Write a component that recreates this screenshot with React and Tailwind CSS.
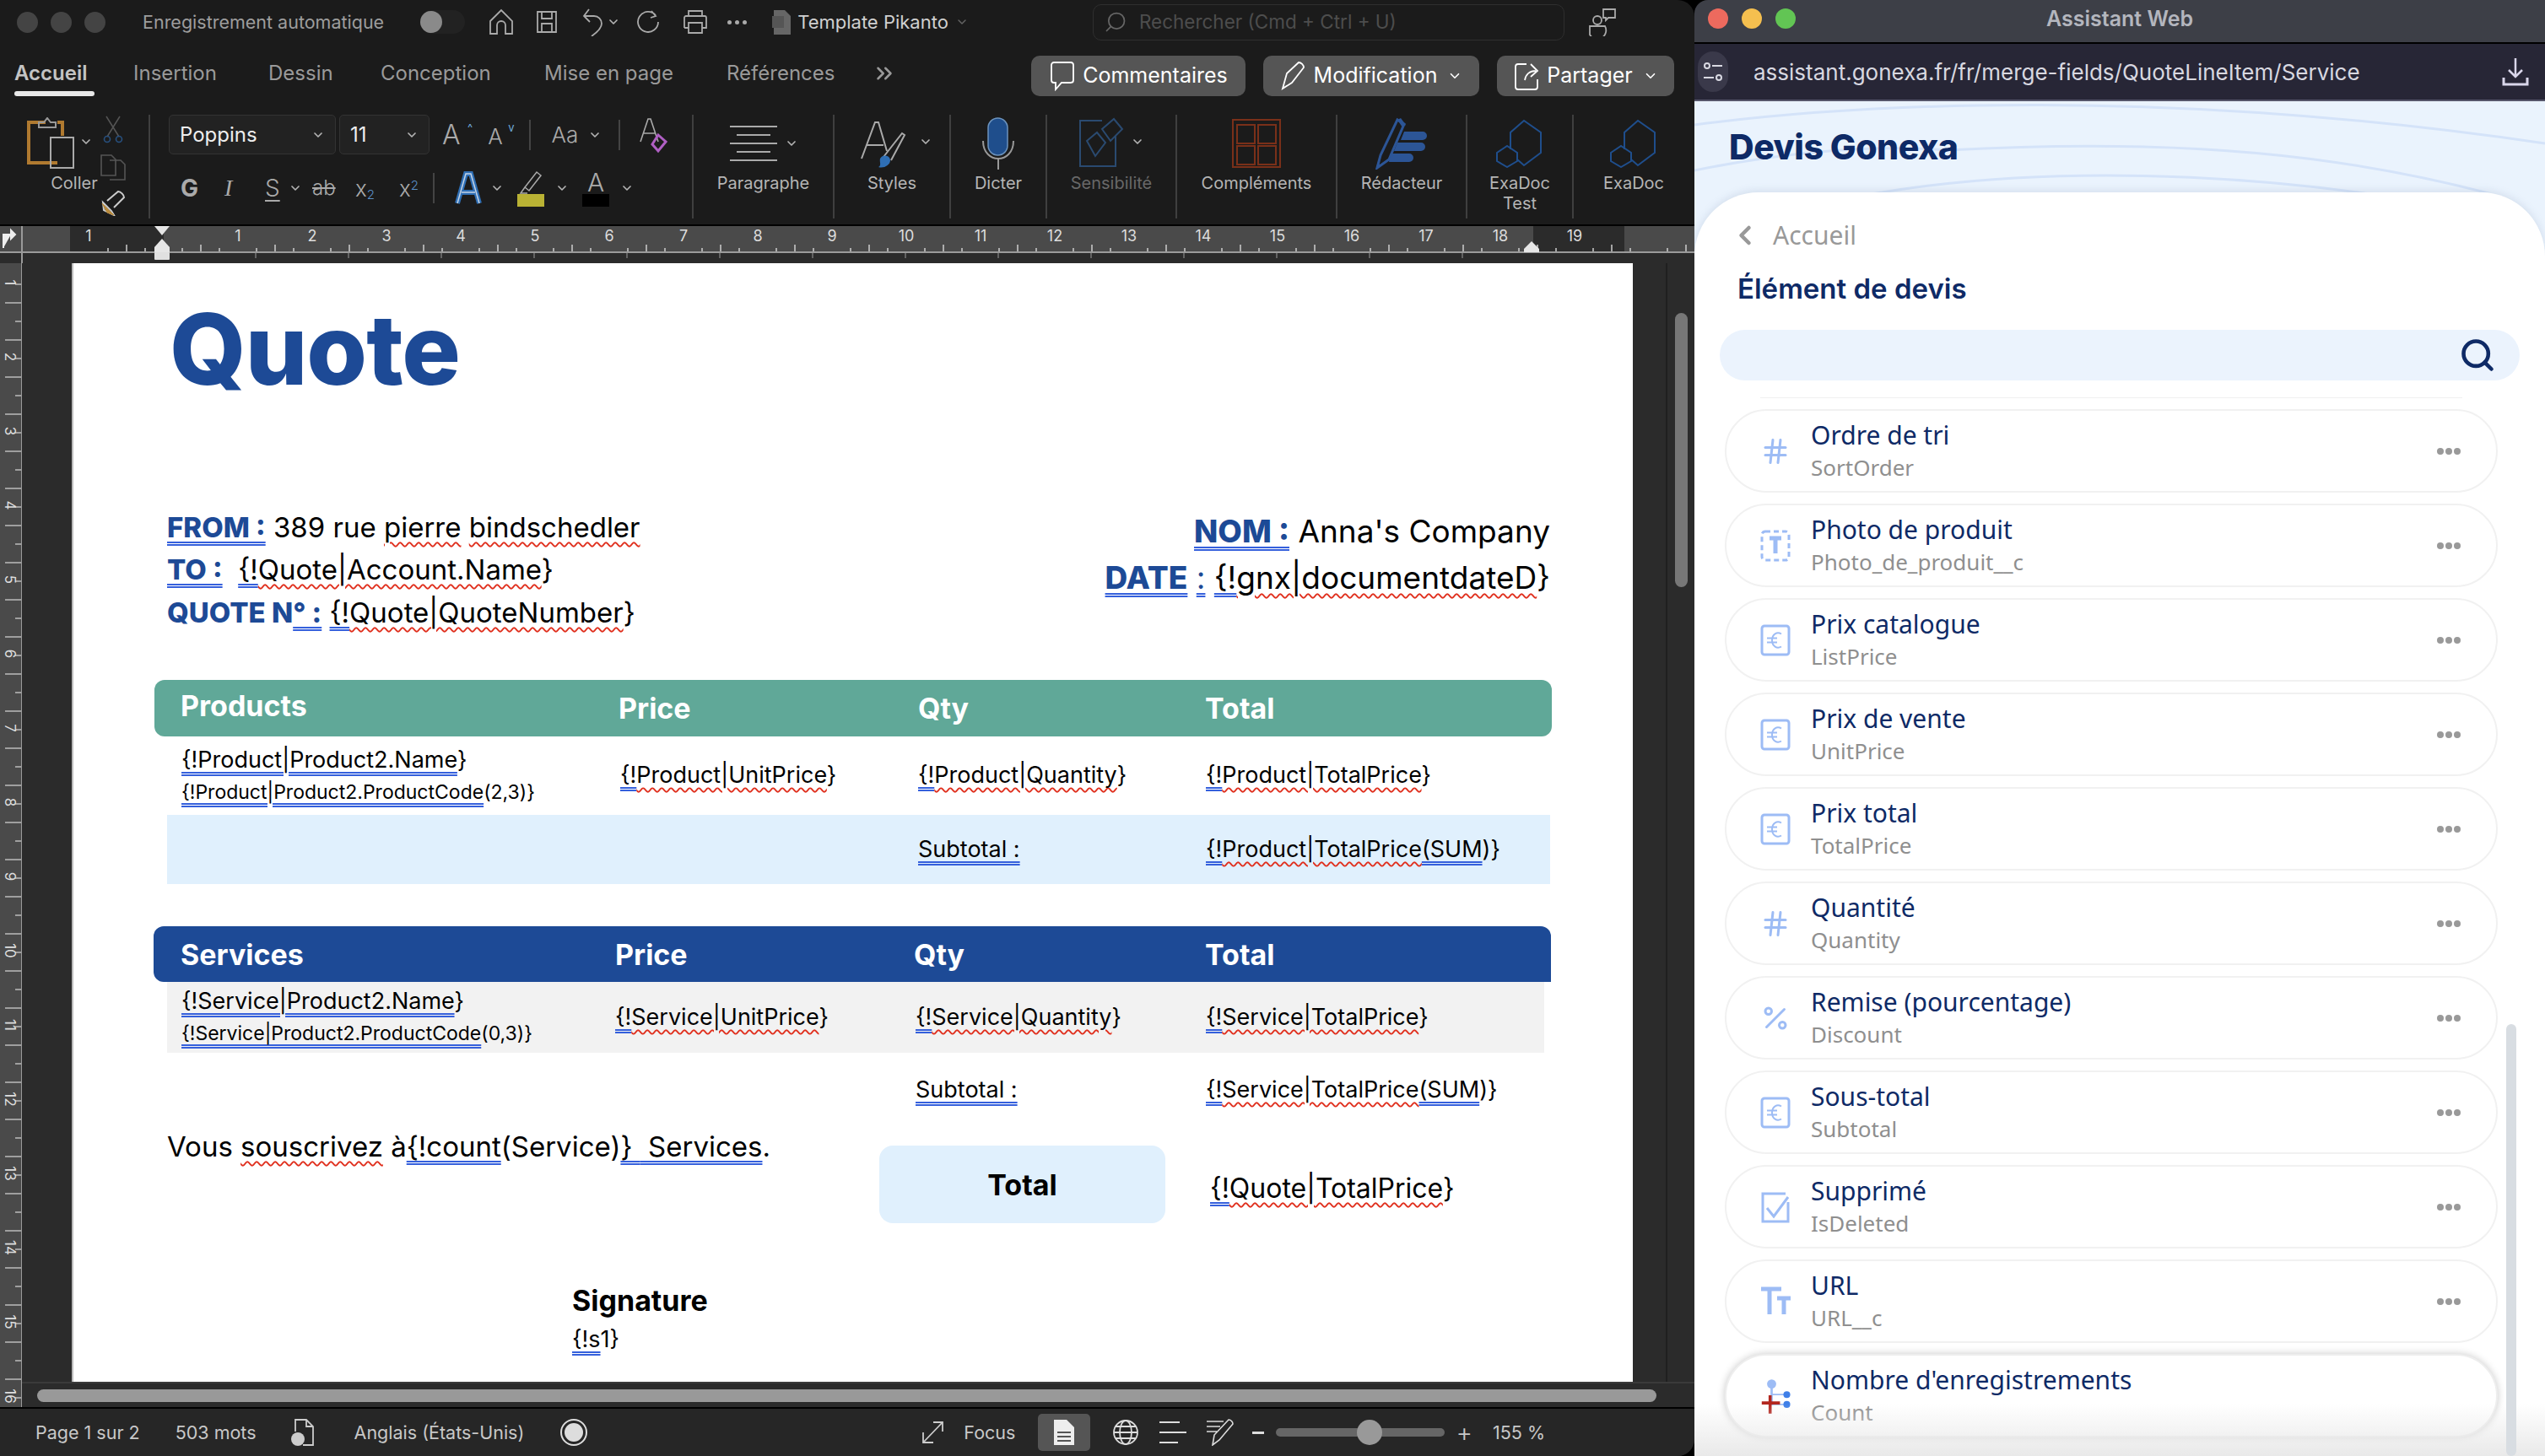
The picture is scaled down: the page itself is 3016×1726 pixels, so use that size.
import { ChevronDown, ChevronLeft, ChevronsRight, Hash, Percent, Search } from "lucide-react";

const blue = "underline decoration-double decoration-[#3560dc] decoration-[2px] underline-offset-[5px]";
const wavy = "underline decoration-wavy decoration-[#e0301e] decoration-[1.5px] underline-offset-[5px]";

// {!Quote|Foo} : blue on the "{!", red squiggle after
function Field({ text, tail }) {
  return (
    <span className="whitespace-nowrap">
      <span className={blue}>{text.slice(0, 2)}</span>
      <span className={wavy}>{text.slice(2)}</span>
      {tail && <span className={blue}>{tail[0]}</span>}
      {tail && tail[1]}
      {!tail && "}"}
    </span>
  );
}

function Chev({ className = "" }) {
  return <ChevronDown size={16} strokeWidth={2.5} className={`text-[#b5b5b5] shrink-0 ${className}`} />;
}

function Ico({ w = 30, h = 30, vb, children, className = "" }) {
  return (
    <svg width={w} height={h} viewBox={vb || `0 0 ${w} ${h}`} fill="none" stroke="#aaa" strokeWidth="1.8" className={`shrink-0 ${className}`}>
      {children}
    </svg>
  );
}

function Group({ w, label, label2, dim, children, last }) {
  return (
    <div className={`flex flex-col items-center h-[123px] shrink-0 ${last ? "" : "border-r-2 border-[#3f3f3f]"}`} style={{ width: w }}>
      <div className="h-[68px] flex items-center justify-center w-full gap-2">{children}</div>
      <div className={`mt-[1px] text-[20px] leading-[24px] text-center ${dim ? "text-[#686868]" : "text-[#b5b5b5]"}`}>
        {label}
        {label2 && <br />}
        {label2}
      </div>
    </div>
  );
}

function TopButton({ icon, label, chevron, w }) {
  return (
    <div className="flex items-center justify-center gap-2 h-[48px] rounded-[10px] bg-[#555] text-white text-[25px] shrink-0" style={{ width: w }}>
      {icon}
      <span>{label}</span>
      {chevron && <ChevronDown size={18} strokeWidth={2.2} className="ml-1" />}
    </div>
  );
}

function HRuler() {
  const ticks = [];
  for (let x = 84 + 22; x < 2008; x += 22) {
    const off = Math.round((x - 194) / 22);
    if (off % 4 === 0) continue;
    ticks.push(<line key={x} x1={x} x2={x} y1={off % 2 === 0 ? 22 : 26} y2="31" stroke="#cfcfcf" strokeWidth="1.5" />);
  }
  const nums = [];
  nums.push(<text key="m" x={105} y="18" fill="#ddd" fontSize="18" textAnchor="middle">1</text>);
  for (let i = 1; i <= 19; i++) {
    nums.push(<text key={i} x={194 + i * 88 - 0} y="18" fill="#ddd" fontSize="18" textAnchor="middle">{i}</text>);
  }
  const low = [];
  for (let x = 303; x < 1830; x += 110) low.push(<line key={x} x1={x} x2={x} y1="31" y2="38" stroke="#777" strokeWidth="1.5" />);
  return (
    <svg width="2008" height="44" className="block shrink-0">
      <rect width="2008" height="44" fill="#2b2b2b" />
      <rect x="0" width="2008" height="31" fill="#4a4a4a" />
      <rect x="83" width="111" height="31" fill="#2b2b2b" />
      <rect x="1817" width="108" height="31" fill="#2b2b2b" />
      {ticks}
      {nums}
      {low}
      <line x1="0" x2="2008" y1="31" y2="31" stroke="#9a9a9a" strokeWidth="2" />
      <line x1="26" x2="26" y1="0" y2="44" stroke="#9a9a9a" strokeWidth="2" />
      <path d="M4 26V10h9M13 5l5 5-5 5z" stroke="#eee" strokeWidth="2" fill="#eee" />
      <path d="M183 0h18l-9 11z" fill="#e6e6e6" />
      <path d="M192 15l9 10v6h-18v-6z" fill="#e6e6e6" />
      <rect x="183" y="31" width="18" height="9" rx="1" fill="#e0e0e0" />
      <path d="M1815 18l9 9v4h-18v-4z" fill="#e6e6e6" />
    </svg>
  );
}

function VRuler() {
  const items = [];
  for (let i = 0; i < 62; i++) {
    const y = 25 + i * 22;
    const long = i % 2 === 1;
    items.push(<line key={i} x1={long ? 6 : 18} x2="26" y1={y} y2={y} stroke="#bdbdbd" strokeWidth="1.5" />);
  }
  const nums = [];
  for (let i = 1; i <= 16; i++) {
    const y = 23 + (i - 1) * 88;
    nums.push(
      <text key={i} x="0" y="0" fill="#ddd" fontSize="17" textAnchor="middle" transform={`translate(6 ${y}) rotate(90)`}>{i}</text>
    );
  }
  return (
    <svg width="26" height="1356" className="block shrink-0">
      <rect width="26" height="1356" fill="#4a4a4a" />
      {items}
      {nums}
      <line x1="26" x2="26" y1="0" y2="1356" stroke="#9a9a9a" strokeWidth="2" />
    </svg>
  );
}

function FontGroup() {
  return (
    <div className="w-[644px] h-[123px] shrink-0 border-r-2 border-[#3f3f3f] pl-[22px] flex flex-col text-[#aaa]">
      <div className="flex items-center h-[47px]">
        <div className="w-[198px] h-[47px] flex items-center justify-between px-3 bg-[#222] border border-[#333] rounded-[5px] text-[#eee] text-[24px]">
          Poppins <Chev />
        </div>
        <div className="ml-[4px] w-[107px] h-[47px] flex items-center justify-between px-3 bg-[#222] border border-[#333] rounded-[5px] text-[#eee] text-[24px]">
          11 <Chev />
        </div>
        <span className="ml-[15px] text-[32px] font-light w-[30px]">A</span>
        <span className="text-[#6fa8d8] text-[13px] -mt-4">^</span>
        <span className="ml-[18px] text-[26px] font-light w-[24px] mt-1">A</span>
        <span className="text-[#6fa8d8] text-[13px] -mt-4">v</span>
        <span className="ml-[18px] border-l-2 border-[#444] h-[36px]" />
        <span className="ml-[24px] text-[26px] font-light w-[36px]">Aa</span>
        <Chev className="ml-2" />
        <span className="ml-[20px] border-l-2 border-[#444] h-[36px]" />
        <svg width="34" height="44" viewBox="0 0 34 44" fill="none" className="ml-[22px]">
          <path d="M2 30 11 3h3l9 27M6 20h13" stroke="#aaa" strokeWidth="1.6" />
          <path d="M23 22l9 8-9 11-7-8z" stroke="#b05fc4" strokeWidth="3" />
        </svg>
      </div>
      <div className="flex items-center h-[46px] mt-[17px] pl-[14px] text-[28px]">
        <span className="w-[22px] font-bold">G</span>
        <span className="ml-[30px] w-[14px] italic font-light font-[Liberation_Serif,serif]">I</span>
        <span className="ml-[34px] w-[16px] font-light underline underline-offset-4">S</span>
        <Chev className="ml-[12px]" />
        <span className="ml-[12px] w-[34px] text-[24px] font-light line-through">ab</span>
        <span className="ml-[17px] w-[36px] text-[26px] font-light">x<sub className="text-[15px] text-[#5a8fc7]">2</sub></span>
        <span className="ml-[16px] w-[34px] text-[26px] font-light">x<sup className="text-[15px] text-[#5a8fc7]">2</sup></span>
        <span className="ml-[6px] border-l-2 border-[#444] h-[36px]" />
        <svg width="36" height="44" viewBox="0 0 36 44" className="ml-[22px]">
          <path d="M5 40 15 5h6l10 35M10 27h16" fill="none" stroke="#2f6fb5" strokeWidth="6" />
          <path d="M5 40 15 5h6l10 35M10 27h16" fill="none" stroke="#c4d4e6" strokeWidth="1.5" />
        </svg>
        <Chev className="ml-[8px]" />
        <div className="ml-[16px] w-[32px] flex flex-col items-center">
          <svg width="30" height="28" viewBox="0 0 30 28" fill="none"><path d="M8 20 22 2l5 4-14 18zM8 20l-5 7h8" stroke="#aaa" strokeWidth="1.5" /></svg>
          <div className="w-[32px] h-[15px] bg-[#b9b234]" />
        </div>
        <Chev className="ml-[13px]" />
        <div className="ml-[16px] w-[32px] flex flex-col items-center">
          <span className="text-[30px] leading-[28px] font-light">A</span>
          <div className="w-[32px] h-[15px] bg-black" />
        </div>
        <Chev className="ml-[13px]" />
      </div>
    </div>
  );
}

function EuroBox() {
  return (
    <svg width="36" height="40" viewBox="0 0 36 40" fill="none" stroke="#9dbcf5" strokeWidth="3">
      <rect x="2" y="3" width="32" height="34" rx="3" />
      <path d="M25 12.5c-5-3-11 0-11 7.5s6 10.5 11 7.5M8 17.5h12M8 22.5h12" strokeWidth="2" />
    </svg>
  );
}

const icons = {
  hash: <Hash size={40} strokeWidth={2} className="text-[#9dbcf5]" />,
  photo: (
    <svg width="36" height="40" viewBox="0 0 36 40" fill="none" stroke="#9dbcf5" strokeWidth="3">
      <rect x="2" y="3" width="32" height="34" rx="4" strokeDasharray="6 4" />
      <path d="M11 11h14M18 11v18" strokeWidth="5" />
    </svg>
  ),
  euro: <EuroBox />,
  percent: <Percent size={42} strokeWidth={2} className="text-[#9dbcf5]" />,
  check: (
    <svg width="36" height="40" viewBox="0 0 36 40" fill="none" stroke="#9dbcf5" strokeWidth="3">
      <path d="M30 4H3v33h30V14" />
      <path d="M8 21l8 10 17-23" />
    </svg>
  ),
  text: (
    <svg width="36" height="36" viewBox="0 0 36 36" fill="none" stroke="#9dbcf5" strokeWidth="5">
      <path d="M1 3h24M11 3v30M20 14h16M28 14v19" />
    </svg>
  ),
  count: (
    <svg width="40" height="44" viewBox="0 0 40 44" fill="none">
      <circle cx="15" cy="6" r="6" fill="#9dbcf5" />
      <path d="M15 10v24" stroke="#9dbcf5" strokeWidth="3" />
      <path d="M15 20h20M15 33h20" stroke="#9dbcf5" strokeWidth="2" />
      <circle cx="35" cy="20" r="4.5" fill="#3f7fe8" />
      <circle cx="35" cy="33" r="4.5" fill="#3f7fe8" />
      <path d="M2 31h24M13 21v24" stroke="#b3261e" strokeWidth="4" />
    </svg>
  ),
};

const fields = [
  ["hash", "Ordre de tri", "SortOrder"],
  ["photo", "Photo de produit", "Photo_de_produit__c"],
  ["euro", "Prix catalogue", "ListPrice"],
  ["euro", "Prix de vente", "UnitPrice"],
  ["euro", "Prix total", "TotalPrice"],
  ["hash", "Quantité", "Quantity"],
  ["percent", "Remise (pourcentage)", "Discount"],
  ["euro", "Sous-total", "Subtotal"],
  ["check", "Supprimé", "IsDeleted"],
  ["text", "URL", "URL__c"],
  ["count", "Nombre d'enregistrements", "Count"],
];

function FieldRow({ icon, title, api, last }) {
  return (
    <div className={`ml-[36px] w-[916px] h-[99px] mb-[13px] shrink-0 rounded-[50px] flex items-center pl-[40px] pr-[42px] bg-white border-2 ${last ? "border-[#eeeeee] shadow-[0_0_10px_rgba(0,0,0,0.22)] relative" : "border-[#f1f1f1]"}`}>
      <div className="w-[36px] flex justify-center shrink-0">{icons[icon]}</div>
      <div className="ml-[24px] flex-1">
        <div className="text-[30px] leading-[38px] text-[#0e2a66]">{title}</div>
        <div className="text-[26px] leading-[38px] text-[#8f8f8f]">{api}</div>
      </div>
      {!last && (
        <div className="flex gap-[2px]">
          <span className="w-[8px] h-[8px] rounded-full bg-[#999]" />
          <span className="w-[8px] h-[8px] rounded-full bg-[#999]" />
          <span className="w-[8px] h-[8px] rounded-full bg-[#999]" />
        </div>
      )}
    </div>
  );
}

function WordWindow() {
  return (
    <div className="w-[2008px] h-[1726px] shrink-0 flex flex-col bg-[#1b1b1b] rounded-r-[20px] overflow-hidden font-[Inter,sans-serif]">
      {/* title bar */}
      <div className="h-[52px] shrink-0 flex items-center relative">
        <div className="flex gap-[15px] pl-[20px]">
          <span className="w-[25px] h-[25px] rounded-full bg-[#444]" />
          <span className="w-[25px] h-[25px] rounded-full bg-[#444]" />
          <span className="w-[25px] h-[25px] rounded-full bg-[#444]" />
        </div>
        <span className="ml-[44px] text-[21.5px] text-[#9d9d9d]">Enregistrement automatique</span>
        <div className="ml-[43px] w-[53px] h-[28px] rounded-full bg-[#222] flex items-center">
          <span className="w-[26px] h-[26px] rounded-full bg-[#8a8a8a]" />
        </div>
        <Ico w={30} h={32} className="ml-[28px]"><path d="M2 15 15 2l13 13v15h-8V20a5 5 0 0 0-10 0v10H2z" /></Ico>
        <Ico w={28} h={30} className="ml-[25px]"><path d="M3 3h22v24H3zM8 3v8h12V3M8 27V17h12v10" /></Ico>
        <Ico w={28} h={34} className="ml-[27px]"><path d="M3 10h12a9 9 0 0 1 9 9c0 5-5 10-12 15M9 2 3 10l7 7" /></Ico>
        <Chev className="ml-[2px]" />
        <Ico w={30} h={30} className="ml-[17px]"><path d="M25 7a12 12 0 1 0 3 8M20 2l5 6-6 2" /></Ico>
        <Ico w={32} h={30} className="ml-[26px]"><path d="M8 8V2h16v6M3 22V10a2 2 0 0 1 2-2h22a2 2 0 0 1 2 2v12h-5M8 22H3M8 16h16v12H8z" /></Ico>
        <div className="ml-[22px] flex gap-[4px]">
          <span className="w-[5px] h-[5px] rounded-full bg-[#aaa]" />
          <span className="w-[5px] h-[5px] rounded-full bg-[#aaa]" />
          <span className="w-[5px] h-[5px] rounded-full bg-[#aaa]" />
        </div>
        <svg width="24" height="30" viewBox="0 0 24 30" className="ml-[30px] shrink-0"><path d="M2 1h13l7 7v22H2z" fill="#666" /><rect x="0" y="8" width="14" height="14" fill="#555" /></svg>
        <span className="ml-[6px] text-[22px] text-[#d0d0d0]">Template Pikanto</span>
        <ChevronDown size={16} className="ml-2 text-[#666]" />
        <div className="ml-[147px] w-[559px] h-[43px] flex items-center rounded-[10px] border border-[#2f2f2f] pl-[12px]">
          <Search size={28} strokeWidth={1.5} className="text-[#666] -scale-x-100" />
          <span className="ml-[14px] text-[22.5px] text-[#4d4d4d]">Rechercher (Cmd + Ctrl + U)</span>
        </div>
        <Ico w={34} h={34} className="ml-[28px]">
          <circle cx="11" cy="15" r="5" /><path d="M2 22h18a9 9 0 0 1-18 10zM18 2h14v10H24l-3 3v-3h-3z" />
        </Ico>
      </div>

      {/* tabs + buttons */}
      <div className="h-[84px] shrink-0 flex items-start pl-[17px] relative">
        <div className="flex pt-[20px] text-[24px] leading-[30px] text-[#9a9a9a]">
          <div className="flex flex-col w-[141px]">
            <span className="text-[#c4c4c4] font-semibold">Accueil</span>
            <span className="mt-[6px] w-[95px] h-[6px] rounded-full bg-[#e8e8e8]" />
          </div>
          <span className="w-[160px]">Insertion</span>
          <span className="w-[133px]">Dessin</span>
          <span className="w-[194px]">Conception</span>
          <span className="w-[216px]">Mise en page</span>
          <span className="w-[172px]">Références</span>
          <ChevronsRight size={30} strokeWidth={2} />
        </div>
        <div className="absolute left-[1222px] top-[14px] flex gap-[21px]">
          <TopButton w={254} label="Commentaires" icon={<Ico w={32} h={36} className="[&_*]:stroke-white"><path d="M6 2h20a3 3 0 0 1 3 3v18a3 3 0 0 1-3 3H15l-7 8v-8H6a3 3 0 0 1-3-3V5a3 3 0 0 1 3-3z" /></Ico>} />
          <div className="w-0 -ml-[21px]" />
          <TopButton w={256} label="Modification" chevron icon={<Ico w={32} h={34} className="[&_*]:stroke-white"><path d="M3 32 8 14 22 1c3 0 6 3 6 6L14 25z" /></Ico>} />
          <TopButton w={210} label="Partager" chevron icon={<Ico w={32} h={34} className="[&_*]:stroke-white"><path d="M16 3H6a3 3 0 0 0-3 3v24a3 3 0 0 0 3 3h20a3 3 0 0 0 3-3v-9M14 22c1-7 6-11 13-11M21 3l8 8-8 7" /></Ico>} />
        </div>
      </div>

      {/* ribbon */}
      <div className="h-[130px] shrink-0 flex items-start">
        <Group w={178} label="Coller">
          <svg width="58" height="62" viewBox="0 0 58 62" fill="none" className="-ml-[34px]">
            <path d="M22 6H2v48h34" stroke="#b07a30" strokeWidth="4" />
            <path d="M14 12V6h6l4-5 4 5h6v6z" stroke="#999" strokeWidth="2" />
            <path d="M36 6h6v16" stroke="#b07a30" strokeWidth="4" />
            <rect x="28" y="24" width="27" height="36" stroke="#aaa" strokeWidth="2" />
          </svg>
          <Chev className="-ml-[4px] -mt-[4px]" />
          <div className="absolute left-[118px] top-[136px] flex flex-col items-center gap-[12px]">
            <svg width="24" height="34" viewBox="0 0 24 34" fill="none"><path d="M4 2l15 24M20 2 5 26" stroke="#555" strokeWidth="1.5" /><circle cx="5" cy="29" r="3.5" stroke="#27507f" strokeWidth="1.6" /><circle cx="19" cy="29" r="3.5" stroke="#27507f" strokeWidth="1.6" /></svg>
            <svg width="32" height="32" viewBox="0 0 32 32" fill="none" stroke="#555" strokeWidth="1.6"><path d="M2 2h12l5 5v19H2zM12 8h13l5 5v18H12" /></svg>
            <svg width="32" height="30" viewBox="0 0 32 30" fill="none"><path d="M4 14 14 24l3 5-12-6zM9 12 22 1c3 0 7 4 7 7L17 20" stroke="#ccc" strokeWidth="2" /><path d="M3 15l14 14-8-3z" fill="#b88a3d" stroke="#b88a3d" /></svg>
          </div>
        </Group>
        <FontGroup />
        <Group w={167} label="Paragraphe">
          <svg width="58" height="42" viewBox="0 0 58 42" fill="none" stroke="#aaa" strokeWidth="2"><path d="M1 1h56M9 11h40M1 21h56M9 31h40M1 41h56" /></svg>
          <Chev />
        </Group>
        <Group w={138} label="Styles">
          <svg width="62" height="60" viewBox="0 0 62 60" fill="none" className="ml-[10px]">
            <path d="M2 48 18 5h4l10 34M8 32h20" stroke="#aaa" strokeWidth="2" />
            <path d="M28 46 50 18l3 2-16 30" stroke="#aaa" strokeWidth="2" />
            <path d="M24 48c3-6 12-4 12 2s-8 10-14 8c4-2 1-6 2-10z" fill="#2f6fb5" />
          </svg>
          <Chev className="-mt-[4px]" />
        </Group>
        <Group w={114} label="Dicter">
          <svg width="40" height="62" viewBox="0 0 40 62" fill="none">
            <rect x="8" y="1" width="23" height="44" rx="11.5" fill="#1f4e8c" stroke="#6c93bd" strokeWidth="1.5" />
            <path d="M2 28c0 28 36 28 36 0M20 50v12" stroke="#999" strokeWidth="2" />
          </svg>
        </Group>
        <Group w={154} label="Sensibilité" dim>
          <svg width="54" height="60" viewBox="0 0 54 60" fill="none" stroke="#2a4a70" strokeWidth="2" className="-mt-[2px]">
            <path d="M28 4H2v54h42V22M10 28l12-10 10 12-12 16zM28 14l14-12 10 12-14 14z" />
          </svg>
          <Chev className="-mt-[4px]" />
        </Group>
        <Group w={190} label="Compléments">
          <svg width="58" height="58" viewBox="0 0 58 58" fill="none" stroke="#7a3019">
            <rect x="1" y="1" width="56" height="56" strokeWidth="2" />
            <path d="M6 7h21v22H6zM31 7h21v22H31zM6 32h21v22H6zM31 32h21v22H31z" strokeWidth="2" />
          </svg>
        </Group>
        <Group w={154} label="Rédacteur">
          <svg width="62" height="62" viewBox="0 0 62 62" fill="none">
            <path d="M2 60 6 45 26 3l8 5-18 42z" stroke="#2c5596" strokeWidth="3" />
            <path d="M26 3l4-2 6 8-4 3z" fill="#2c5596" />
            <path d="M34 17h22a5 5 0 0 1 0 10H30zM26 30h28a5 5 0 0 1 0 10H22zM18 43h22a5 5 0 0 1 0 10H16z" fill="#2c5596" />
          </svg>
        </Group>
        <Group w={126} label="ExaDoc" label2="Test">
          <svg width="56" height="58" viewBox="0 0 56 58" fill="none" stroke="#1f4e8c" strokeWidth="2"><path d="M17 36V16L33 2l20 14v24L33 55l-8-7M1 40l12-8 12 8v10l-12 7-12-7z" /></svg>
        </Group>
        <Group w={142} label="ExaDoc" last>
          <svg width="56" height="58" viewBox="0 0 56 58" fill="none" stroke="#1f4e8c" strokeWidth="2"><path d="M17 36V16L33 2l20 14v24L33 55l-8-7M1 40l12-8 12 8v10l-12 7-12-7z" /></svg>
        </Group>
      </div>

      <div className="h-[2px] bg-black shrink-0" />
      <HRuler />

      {/* document area */}
      <div className="h-[1356px] shrink-0 flex bg-[#2b2b2b]">
        <VRuler />
        <div className="flex flex-col w-[1982px]">
          <div className="h-[1326px] flex shrink-0">
            <div className="ml-[59px] w-[1850px] h-[1326px] bg-white shrink-0 overflow-hidden pl-[111px] text-black border-l-2 border-[#bbb]">
              <div className="pt-[32px] pl-[3px] text-[116px] leading-[140px] font-extrabold text-[#1d4a96] tracking-[-1px]">Quote</div>

              <div className="mt-[116px] w-[1639px] flex justify-between">
                <div className="text-[33px] leading-[50px]">
                  <div>
                    <span className={`font-extrabold text-[#1d4a96] ${blue}`}>FROM :</span> 389 rue <span className={wavy}>pierre</span> <span className={wavy}>bindschedler</span>
                  </div>
                  <div>
                    <span className={`font-extrabold text-[#1d4a96] ${blue}`}>TO :</span>&nbsp; <Field text="{!Quote|Account.Name" />
                  </div>
                  <div className="leading-[52px]">
                    <span className="font-extrabold text-[#1d4a96]">QUOTE N<span className={blue}>° :</span></span>&nbsp;<Field text="{!Quote|QuoteNumber" />
                  </div>
                </div>
                <div className="pt-[2px] text-[37px] leading-[55px] text-right">
                  <div>
                    <span className={`font-extrabold text-[#1d4a96] ${blue}`}>NOM :</span> Anna's Company
                  </div>
                  <div>
                    <span className={`font-extrabold text-[#1d4a96] ${blue}`}>DATE</span> <span className={`text-[#1d4a96] ${blue}`}>:</span> <Field text="{!gnx|documentdateD" />
                  </div>
                </div>
              </div>

              {/* products */}
              <div className="mt-[54px] -ml-[15px] w-[1656px] h-[67px] rounded-[12px] bg-[#60a898] flex items-center pl-[31px] text-white font-bold text-[34px]">
                <span className="w-[519px] -mt-[6px]">Products</span>
                <span className="w-[355px]">Price</span>
                <span className="w-[340px]">Qty</span>
                <span>Total</span>
              </div>
              <div className="w-[1639px] h-[93px] flex items-center pl-[17px] text-[27px] bg-white">
                <div className="w-[520px]">
                  <div className="leading-[38px]"><span className={blue}>{"{!Product|Product2.Name"}</span>{"}"}</div>
                  <div className="text-[23px] leading-[38px]"><span className={blue}>{"{!Product|Product2.ProductCode"}</span>(2,3)}</div>
                </div>
                <div className="w-[353px]"><Field text="{!Product|UnitPrice" /></div>
                <div className="w-[341px]"><Field text="{!Product|Quantity" /></div>
                <div><Field text="{!Product|TotalPrice" /></div>
              </div>
              <div className="w-[1639px] h-[82px] flex items-center pl-[890px] text-[27px] bg-[#e0f0fd]">
                <div className="w-[341px]"><span className={blue}>Subtotal :</span></div>
                <div><Field text="{!Product|TotalPrice" tail={["(SUM", ")}"]} /></div>
              </div>

              {/* services */}
              <div className="mt-[50px] -ml-[16px] w-[1656px] h-[66px] rounded-t-[12px] rounded-bl-[12px] bg-[#1d4a96] flex items-center pl-[32px] text-white font-bold text-[34px] relative">
                <span className="w-[515px]">Services</span>
                <span className="w-[354px]">Price</span>
                <span className="w-[345px]">Qty</span>
                <span>Total</span>
              </div>
              <div className="w-[1632px] h-[84px] flex items-center pl-[17px] text-[27px] bg-[#f2f2f2]">
                <div className="w-[514px]">
                  <div className="leading-[38px]"><span className={blue}>{"{!Service|Product2.Name"}</span>{"}"}</div>
                  <div className="text-[23px] leading-[38px]"><span className={blue}>{"{!Service|Product2.ProductCode"}</span>(0,3)}</div>
                </div>
                <div className="w-[356px]"><Field text="{!Service|UnitPrice" /></div>
                <div className="w-[344px]"><Field text="{!Service|Quantity" /></div>
                <div><Field text="{!Service|TotalPrice" /></div>
              </div>
              <div className="w-[1639px] h-[88px] flex items-center pl-[887px] text-[27px]">
                <div className="w-[344px]"><span className={blue}>Subtotal :</span></div>
                <div><Field text="{!Service|TotalPrice" tail={["(SUM", ")}"]} /></div>
              </div>

              <div className="flex">
                <div className="w-[844px] text-[33px] leading-[46px]">
                  Vous <span className={wavy}>souscrivez</span> à<span className={blue}>{"{!count"}</span>(Service)<span className={blue}>{"}  "}&nbsp;Services</span>.
                </div>
                <div className="mt-[22px] w-[339px] h-[92px] rounded-[16px] bg-[#e0f0fd] flex items-center justify-center font-bold text-[34px]">Total</div>
                <div className="ml-[53px] mt-[50px] text-[32px] leading-[46px]"><Field text="{!Quote|TotalPrice" /></div>
              </div>

              <div className="mt-[69px] pl-[480px] text-[34px] font-bold leading-[46px]">Signature</div>
              <div className="pl-[480px] text-[27px] leading-[46px]"><span className={blue}>{"{!s"}</span>1}</div>
            </div>
            <div className="w-[72px] flex shrink-0 relative">
              <div className="w-[41px] border-r-2 border-[#1f1f1f]" />
              <div className="ml-[9px] mt-[59px] w-[15px] h-[325px] rounded-full bg-[#777]" />
            </div>
          </div>
          <div className="h-[30px] flex items-center pl-[18px] border-t-2 border-[#3a3a3a]">
            <div className="w-[1919px] h-[15px] rounded-full bg-[#999]" />
          </div>
        </div>
      </div>

      {/* status bar */}
      <div className="flex-1 flex items-center border-t-2 border-black bg-[#262626] text-[21.5px] text-[#c8c8c8] relative">
        <span className="ml-[42px]">Page 1 sur 2</span>
        <span className="ml-[42px]">503 mots</span>
        <svg width="30" height="34" viewBox="0 0 30 34" fill="none" className="ml-[40px]">
          <path d="M6 16V2h13l8 8v22H15M19 2v8h8" stroke="#ccc" strokeWidth="1.8" />
          <circle cx="9" cy="25" r="8" fill="#ccc" />
        </svg>
        <span className="ml-[46px]">Anglais (États-Unis)</span>
        <div className="ml-[43px] w-[32px] h-[32px] rounded-full border-2 border-[#ddd] flex items-center justify-center">
          <span className="w-[22px] h-[22px] rounded-full bg-[#ddd]" />
        </div>
        <svg width="26" height="26" viewBox="0 0 26 26" fill="none" stroke="#ccc" strokeWidth="1.8" className="ml-[396px] shrink-0">
          <path d="M2 13v12h12M25 12V1H14M2 25 25 1" />
        </svg>
        <span className="ml-[24px]">Focus</span>
        <div className="ml-[27px] w-[62px] h-[44px] rounded-[5px] bg-[#555] flex items-center justify-center">
          <svg width="26" height="32" viewBox="0 0 26 32"><path d="M1 1h15l9 9v21H1z" fill="#eee" /><path d="M5 16h16M5 21h16M5 26h16" stroke="#555" strokeWidth="2" /></svg>
        </div>
        <svg width="32" height="32" viewBox="0 0 32 32" fill="none" stroke="#ddd" strokeWidth="1.8" className="ml-[26px]">
          <circle cx="16" cy="16" r="14" /><ellipse cx="16" cy="16" rx="7" ry="14" /><path d="M2 16h28M4 9h24M4 23h24" />
        </svg>
        <svg width="34" height="26" viewBox="0 0 34 26" fill="none" stroke="#ddd" strokeWidth="2" className="ml-[23px]"><path d="M1 1h24M1 13h32M1 25h22" /></svg>
        <svg width="34" height="32" viewBox="0 0 34 32" fill="none" stroke="#ddd" strokeWidth="1.6" className="ml-[22px]"><path d="M1 3h20M1 9h16M1 15h12M8 31l2-12L27 1c3 0 5 3 5 5L16 25z" /></svg>
        <span className="ml-[21px] w-[14px] h-[3px] bg-[#ddd]" />
        <div className="ml-[14px] w-[200px] h-[10px] rounded-full bg-[#666] flex items-center relative">
          <span className="absolute left-[96px] w-[30px] h-[30px] rounded-full bg-[#999]" />
        </div>
        <span className="ml-[13px] text-[30px] font-light">+</span>
        <span className="ml-[24px]">155 %</span>
      </div>
    </div>
  );
}

function AssistantPanel() {
  return (
    <div className="w-[1008px] h-[1726px] shrink-0 flex flex-col relative overflow-hidden rounded-tl-[16px] font-['Noto_Sans',sans-serif]">
      <div className="h-[50px] shrink-0 bg-[#3d3f47] flex items-center justify-center relative font-[Inter,sans-serif]">
        <div className="absolute left-[16px] top-[10px] flex gap-[16px]">
          <span className="w-[24px] h-[24px] rounded-full bg-[#ed6a5e]" />
          <span className="w-[24px] h-[24px] rounded-full bg-[#f5bf4f]" />
          <span className="w-[24px] h-[24px] rounded-full bg-[#62c554]" />
        </div>
        <span className="text-[25px] font-semibold text-[#b4b6be] -mt-[4px]">Assistant Web</span>
      </div>
      <div className="h-[2px] shrink-0 bg-black" />
      <div className="h-[66px] shrink-0 bg-[#272636] flex items-center font-[Inter,sans-serif]">
        <div className="ml-[4px] w-[36px] h-[48px] rounded-[18px] bg-[#3a394a] flex items-center justify-center">
          <svg width="26" height="26" viewBox="0 0 26 26" fill="none" stroke="#d9d9e2" strokeWidth="2">
            <circle cx="6" cy="6" r="3" /><path d="M12 6h12M2 20h12" /><circle cx="20" cy="20" r="3" />
          </svg>
        </div>
        <span className="ml-[30px] text-[26px] text-[#d8d8e0] whitespace-nowrap">assistant.gonexa.fr/fr/merge-fields/QuoteLineItem/Service</span>
        <svg width="32" height="34" viewBox="0 0 32 34" fill="none" stroke="#d9d6ea" strokeWidth="2.5" className="ml-auto mr-[19px]">
          <path d="M16 1v22M8 15l8 8 8-8" /><path d="M2 24v8h28v-8" strokeWidth="3" />
        </svg>
      </div>
      <div className="h-[2px] shrink-0 bg-[#55556a]" />

      <div className="flex-1 flex flex-col bg-[#eaf3fd] relative min-h-0">
        <svg width="1008" height="108" viewBox="0 0 1008 108" fill="none" stroke="#d4e3f9" strokeWidth="3" className="absolute left-0 top-0">
          <path d="M0 28C200 2 560-16 1008 50" />
          <path d="M300 58c260-14 480 0 708 70" />
          <path d="M0 82c120-24 220-30 300-24" />
          <path d="M210 110c220-38 520-28 800 40" />
        </svg>
        <div className="h-[108px] shrink-0 flex items-center pl-[41px] relative">
          <span className="text-[41px] font-extrabold tracking-[-0.5px] text-[#0e2a66] font-[Inter,sans-serif] mt-[2px]">Devis Gonexa</span>
        </div>
        <div className="flex-1 bg-white rounded-t-[76px] shadow-[0_-2px_10px_rgba(120,140,170,0.2)] pt-[31px] relative overflow-hidden flex flex-col">
          <div className="flex items-center h-[40px] pl-[50px] shrink-0">
            <ChevronLeft size={36} strokeWidth={3} className="text-[#999] -ml-[8px]" />
            <span className="ml-[15px] text-[30px] leading-[40px] text-[#999]">Accueil</span>
          </div>
          <div className="mt-[20px] pl-[51px] text-[33px] leading-[46px] font-semibold text-[#0e2a66] shrink-0 font-[Inter,sans-serif]">Élément de devis</div>
          <div className="mt-[26px] ml-[30px] w-[948px] h-[60px] shrink-0 rounded-full bg-[#ebf3fd] flex items-center justify-end pr-[28px]">
            <Search size={44} strokeWidth={2.5} className="text-[#0e2a66]" />
          </div>
          <div className="mt-[20px] ml-[78px] w-[832px] h-[1px] bg-[#f0f0f0] shrink-0" />
          <div className="mt-[13px] flex flex-col">
            {fields.map((f, i) => (
              <FieldRow key={f[1]} icon={f[0]} title={f[1]} api={f[2]} last={i === fields.length - 1} />
            ))}
          </div>
          <div className="absolute left-0 right-0 bottom-0 h-[62px] bg-gradient-to-b from-transparent to-[#e9e9e9]" />
          <div className="absolute left-[962px] bottom-0 top-[986px] w-[12px] rounded-full bg-[#d8dde2]" />
        </div>
      </div>
    </div>
  );
}

export default function App() {
  return (
    <div className="w-[3016px] h-[1726px] flex bg-black overflow-hidden relative">
      <WordWindow />
      <AssistantPanel />
    </div>
  );
}
